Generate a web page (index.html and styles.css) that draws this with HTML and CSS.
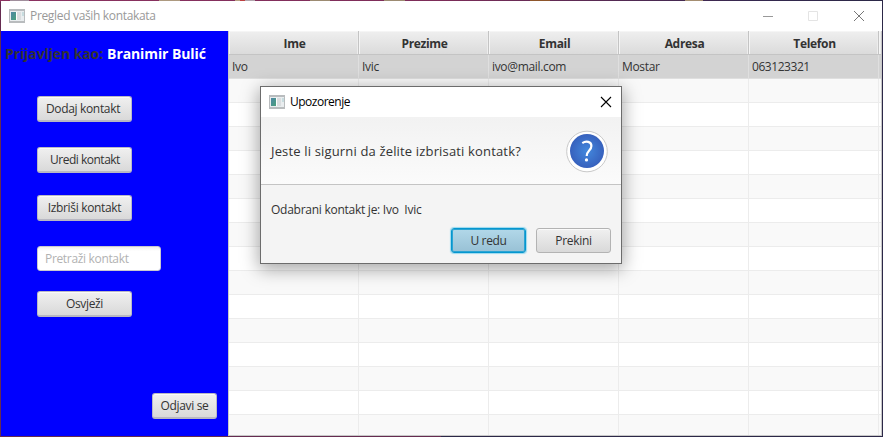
FILE: index.html
```html
<!DOCTYPE html>
<html lang="hr">
<head>
<meta charset="utf-8">
<title>Pregled vaših kontakata</title>
<link rel="stylesheet" href="styles.css">
</head>
<body>
<div class="window">
  <header class="titlebar">
    <svg class="app-icon" width="16" height="14" viewBox="0 0 16 14"><defs><linearGradient id="g" x2="1" y2="1"><stop stop-color="#4d87a5"/><stop offset="1" stop-color="#4aa07c"/></linearGradient></defs><path fill="#b9bcbe" d="M0 0h16v14H0z"/><path fill="#e9edef" d="M1 2h14v10H1z"/><path fill="url(#g)" d="M2 3h5v8H2z"/><path fill="#fff" d="M7 3h1v8H7z"/><path fill="#dadddf" d="M8 3h4v8H8z"/><path fill="#c7dcdf" d="M13 3h2v4h-2z"/></svg>
    <span class="title t-main">Pregled vaših kontakata</span>
    <svg class="controls" width="102" height="12" viewBox="0 0 102 12"><path stroke="#999" d="M0 6.5h10"/><path fill="none" stroke="#e4e4e4" d="M45.500 1.500h9v9h-9z"/><path stroke="#777" d="M91 1l10 10M101 1L91 11"/></svg>
  </header>
  <main class="content">
    <aside class="sidebar">
      <p class="login"><span class="login-label">Prijavljen kao:</span><span class="login-name">Branimir Bulić</span></p>
      <button class="btn add"><span class="t-add">Dodaj kontakt</span></button>
      <button class="btn edit"><span class="t-edit">Uredi kontakt</span></button>
      <button class="btn delete"><span class="t-delete">Izbriši kontakt</span></button>
      <div class="search"><span class="t-search">Pretraži kontakt</span></div>
      <button class="btn refresh"><span class="t-refresh">Osvježi</span></button>
      <button class="btn logout"><span class="t-logout">Odjavi se</span></button>
    </aside>
    <section class="table">
      <div class="row head"><div>Ime</div><div>Prezime</div><div>Email</div><div>Adresa</div><div>Telefon</div><div></div></div>
      <div class="row selected"><div>Ivo</div><div>Ivic</div><div><span class="t-mail">ivo@mail.com</span></div><div>Mostar</div><div><span class="t-phone">063123321</span></div><div></div></div>
      <div class="row odd"><div></div><div></div><div></div><div></div><div></div><div></div></div>
      <div class="row"><div></div><div></div><div></div><div></div><div></div><div></div></div>
      <div class="row odd"><div></div><div></div><div></div><div></div><div></div><div></div></div>
      <div class="row"><div></div><div></div><div></div><div></div><div></div><div></div></div>
      <div class="row odd"><div></div><div></div><div></div><div></div><div></div><div></div></div>
      <div class="row"><div></div><div></div><div></div><div></div><div></div><div></div></div>
      <div class="row odd"><div></div><div></div><div></div><div></div><div></div><div></div></div>
      <div class="row"><div></div><div></div><div></div><div></div><div></div><div></div></div>
      <div class="row odd"><div></div><div></div><div></div><div></div><div></div><div></div></div>
      <div class="row"><div></div><div></div><div></div><div></div><div></div><div></div></div>
      <div class="row odd"><div></div><div></div><div></div><div></div><div></div><div></div></div>
      <div class="row"><div></div><div></div><div></div><div></div><div></div><div></div></div>
      <div class="row odd"><div></div><div></div><div></div><div></div><div></div><div></div></div>
      <div class="row"><div></div><div></div><div></div><div></div><div></div><div></div></div>
      <div class="row odd"><div></div><div></div><div></div><div></div><div></div><div></div></div>
    </section>
  </main>
</div>
<div class="dialog">
  <header class="dialog-title">
    <svg class="app-icon" width="16" height="14" viewBox="0 0 16 14"><path fill="#b9bcbe" d="M0 0h16v14H0z"/><path fill="#e9edef" d="M1 2h14v10H1z"/><path fill="url(#g)" d="M2 3h5v8H2z"/><path fill="#fff" d="M7 3h1v8H7z"/><path fill="#dadddf" d="M8 3h4v8H8z"/><path fill="#c7dcdf" d="M13 3h2v4h-2z"/></svg>
    <span class="title t-warning">Upozorenje</span>
    <svg class="dialog-close" width="12" height="12" viewBox="0 0 12 12"><path stroke="#000" stroke-width="1.100" d="M1 1l10 10M11 1L1 11"/></svg>
  </header>
  <div class="dialog-header">
    <span class="t-question">Jeste li sigurni da želite izbrisati kontatk?</span>
    <svg class="question" width="44" height="44" viewBox="0 0 44 44"><defs><radialGradient id="q"><stop stop-color="#4388dd"/><stop offset="1" stop-color="#3761bd"/></radialGradient></defs><circle cx="22" cy="22.500" r="20.300" fill="#fff" stroke="#c9c9c9"/><circle cx="22" cy="22" r="17" fill="url(#q)"/><path fill="none" stroke="#fff" stroke-width="2.200" d="M17.300 14.100C21 11.600 26.400 12.500 26.400 17C26.400 21.500 21.700 21.600 21.700 27"/><circle cx="21.500" cy="30.900" r="1.600" fill="#fff"/></svg>
  </div>
  <p class="dialog-text"><span class="t-selected">Odabrani kontakt je: Ivo&nbsp; Ivic</span></p>
  <div class="dialog-actions"><button class="btn primary"><span class="t-ok">U redu</span></button><button class="btn cancel"><span class="t-cancel">Prekini</span></button></div>
</div>
</body>
</html>
```
FILE: styles.css
```css
* { box-sizing: border-box; }
body {
  margin: 0;
  width: 883px;
  height: 437px;
  overflow: hidden;
  padding: 1px;
  background:
    linear-gradient(90deg, transparent 10px, #a08e9c 10px 29px, transparent 29px 159px, #ad9a80 159px 180px, transparent 180px 235px, #b8a083 235px 240px, #bd4141 240px 245px, #b1a5ad 245px 255px, transparent 255px 310px, #9c8b72 310px 330px, transparent 330px 384px, #9c8b72 384px 405px, transparent 405px 530px, #8e562b 530px 550px, transparent 550px 685px, #a48e71 685px 703px, transparent 703px) 0 0 / 100% 1px no-repeat,
    linear-gradient(90deg, #8c3261, #7c2c58 50%, #35284f 85%, #2b2847) 0 0 / 100% 2px no-repeat,
    linear-gradient(90deg, #652b50 50%, #2c2848 50%);
  font: 12px/16px "Open Sans", "Noto Sans", sans-serif;
  letter-spacing: -.33px;
  color: #333;
}
span { white-space: nowrap; }
.window { width: 881px; height: 435px; background: #fff; }
.titlebar { height: 30px; display: flex; align-items: center; padding: 0 17px 0 8px; color: #999; }
.app-icon { flex: none; }
.title { margin-left: 5px; }
.controls { margin-left: auto; }
.content { display: flex; height: 405px; }
.sidebar { width: 227px; height: 405px; background: #00f; display: flex; flex-direction: column; align-items: flex-start; padding: 13px 11px 17px 36px; }
.login { margin: 0 0 32px -32px; font-size: 14px; line-height: 20px; font-weight: 700; letter-spacing: -.1px; white-space: nowrap; display: flex; gap: 4px; }
.login-name { color: #fff; }
.btn {
  width: 95px;
  height: 26px;
  flex: none;
  margin: 0;
  padding: 0;
  border: 1px solid #b9b9c5;
  border-bottom: 2px solid #b8b8c2;
  border-radius: 3px;
  background: linear-gradient(#f0f0f0, #d9d9d9);
  box-shadow: inset 0 1px #fafafa;
  font: inherit;
  letter-spacing: inherit;
  color: #333;
  text-align: center;
}
.add { padding-right: 3px; }
.edit { margin-top: 25px; padding-left: 1px; }
.t-edit { letter-spacing: -.5px; }
.delete { margin-top: 22px; }
.search { width: 124px; height: 25px; margin-top: 25px; border: 1px solid #c8c8d0; border-radius: 3px; background: linear-gradient(#eee, #fff 4px); padding: 4px 7px; color: #b2b2b2; line-height: 16px; }
.refresh { margin-top: 20px; }
.logout { width: 65px; margin-top: auto; align-self: flex-end; }
.table { width: 654px; height: 405px; border: solid #c8c8c8; border-width: 0 1px 1px; overflow: hidden; }
.row { display: grid; grid-template-columns: repeat(5, 130px) 2px; height: 24px; background: #fff; }
.row > div { border-right: 1px solid #ececec; border-bottom: 1px solid #ececec; padding: 4px 3px 0; line-height: 16px; white-space: nowrap; }
.row > div:last-child { border-right: 0; padding: 0; }
.odd { background: #f9f9f9; }
.selected { background: #d3d3d3; }
.selected > div { border-color: #dfdfdf; }
.t-phone { letter-spacing: -.45px; }
.head { background: linear-gradient(#efefef, #dadada); font-weight: 700; }
.head > div { border-color: #c4c4c4; box-shadow: inset 1px 1px #f5f5f5, inset -1px 0 #ededed; text-align: center; padding: 5px 1px 0 3px; }
.dialog { position: absolute; left: 260px; top: 86px; width: 362px; height: 178px; border: 1px solid #6c6c6c; background: #f4f4f4; box-shadow: 0 4px 17px 1px rgba(0, 0, 0, .36); }
.dialog-title { height: 30px; background: #fff; color: #000; display: flex; align-items: center; padding: 0 9px 0 8px; }
.t-warning { letter-spacing: -.5px; }
.dialog-close { margin-left: auto; }
.dialog-header { height: 68px; padding: 0 12px 0 10px; display: flex; align-items: center; justify-content: space-between; border-bottom: 1px solid #c4c4c4; background: linear-gradient(#f2f2f2, #fbfbfb); font-size: 13px; letter-spacing: .16px; }
.dialog-text { margin: 0; padding: 17px 10px 9px; height: 42px; line-height: 16px; letter-spacing: -.26px; }
.dialog-actions { display: flex; justify-content: flex-end; gap: 10px; padding: 0 10px; }
.dialog-actions .btn { width: 75px; height: 25px; border: 1px solid #b3b3b3; margin-top: 1px; }
.dialog-actions .primary { border: 1px solid #0596cf; background: linear-gradient(#b2d8e9, #98c1d5); box-shadow: 0 0 1px 1px #9ad9ee, inset 0 0 0 1px #2ba4d3; }
```
